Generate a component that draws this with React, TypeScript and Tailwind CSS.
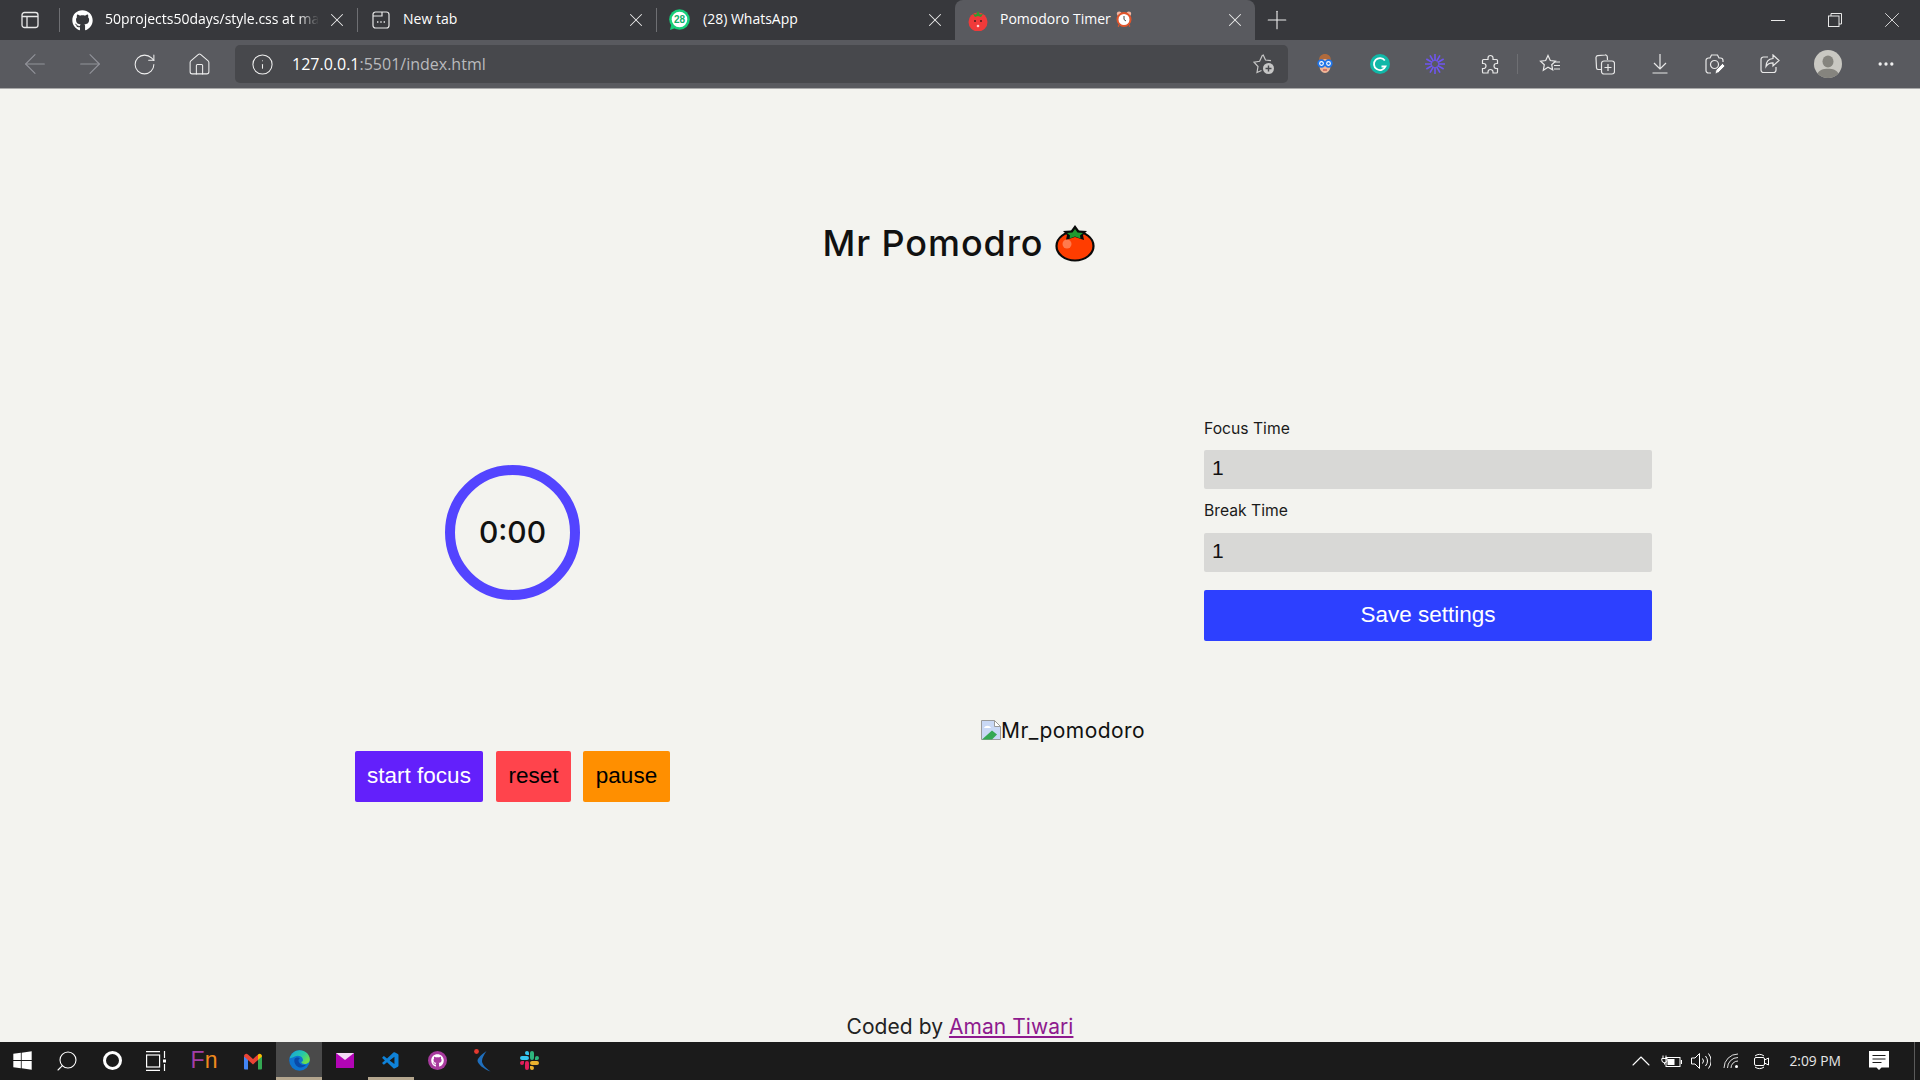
import { ArrowLeft, ArrowRight, ChevronUp, Home, Info, MoreHorizontal, Plus, RotateCw, Search, X } from 'lucide-react';
import type { ReactNode } from 'react';
import { FaGithub, FaWindows } from 'react-icons/fa';
import { VscVscode } from 'react-icons/vsc';

const uiFont = "font-['Open_Sans',sans-serif]";
const pageFont = "font-['Inter',sans-serif]";
const armFont = "font-['Liberation_Sans',Arial,sans-serif]";

const SidebarIcon = () => (
  <svg width="18" height="18" viewBox="0 0 18 18" fill="none" stroke="#e8e8e8" strokeWidth="1.3">
    <rect x="1" y="1.5" width="16" height="15" rx="2.5" />
    <path d="M1 5.5h16M6 5.5v11" />
  </svg>
);

const NewTabIcon = () => (
  <svg width="18" height="18" viewBox="0 0 18 18" fill="none" stroke="#e8e8e8" strokeWidth="1.2">
    <path d="M3.5 1h11A2.5 2.5 0 0 1 17 3.500v11a2.500 2.500 0 0 1-2.500 2.500h-11A2.500 2.500 0 0 1 1 14.500v-11A2.500 2.500 0 0 1 3.500 1zM1 5h9V1" />
    <path d="M5 11h1.400M8.300 11h1.400M11.600 11H13" strokeWidth="1.600" />
  </svg>
);

const WhatsAppIcon = () => (
  <svg width="21" height="22" viewBox="0 0 21 22">
    <circle cx="10.500" cy="10.500" r="10.300" fill="#17cf7a" />
    <path d="M1 21l1.500-6 4 4z" fill="#17cf7a" />
    <circle cx="10.500" cy="10.500" r="7.800" fill="#ffffff" />
    <text x="10.500" y="14" textAnchor="middle" fontSize="10" fontWeight="700" fill="#12b06a" fontFamily="Liberation Sans, sans-serif">28</text>
  </svg>
);

const TabTomato = () => (
  <svg width="20" height="21" viewBox="0 0 20 21">
    <circle cx="10" cy="12" r="9.500" fill="#f03a3a" />
    <path d="M5 4l3 .5L10 1l2 3.500 3-.5-2 3-3-1-3 1z" fill="#2e9b32" />
    <circle cx="7" cy="11" r="1" fill="#4b1d1d" />
    <circle cx="13" cy="11" r="1" fill="#4b1d1d" />
    <circle cx="10" cy="16" r="1.300" fill="#ffd3d3" />
  </svg>
);

const AlarmEmoji = () => (
  <svg width="16" height="16" viewBox="0 0 16 16">
    <circle cx="3.200" cy="2.800" r="2.400" fill="#f2b5a0" />
    <circle cx="12.800" cy="2.800" r="2.400" fill="#f2b5a0" />
    <circle cx="8" cy="8.500" r="6.500" fill="#fff" stroke="#e2552b" strokeWidth="2" />
    <path d="M8 5v3.500l2 1.500" fill="none" stroke="#444" strokeWidth="1" />
    <path d="M3 14.500l-1 1M13 14.500l1 1" stroke="#e2552b" strokeWidth="1.400" />
  </svg>
);

const StarPlusIcon = () => (
  <svg width="22" height="22" viewBox="0 0 22 22" fill="none" stroke="#c6c6c6" strokeWidth="1.200">
    <path d="M10 1.500l2.500 5.500 5.500.6M8.500 17.500L4 19.500l1-6L1 9.200l5.600-.9L9.500 2" />
    <circle cx="15.500" cy="15.500" r="5.500" fill="#c6c6c6" stroke="none" />
    <path d="M15.500 12.500v6M12.500 15.500h6" stroke="#47484c" strokeWidth="1.400" />
  </svg>
);

const GogglesIcon = () => (
  <svg width="16" height="22" viewBox="0 0 16 22">
    <path d="M2 8c0-5 2.500-7 6-7s6 2 6 7l1 5H1z" fill="#b06a3c" />
    <ellipse cx="8" cy="13" rx="5.500" ry="7" fill="#f0b696" />
    <circle cx="4.500" cy="10.500" r="3.300" fill="#fff" stroke="#1f74e8" strokeWidth="1.800" />
    <circle cx="11.500" cy="10.500" r="3.300" fill="#fff" stroke="#1f74e8" strokeWidth="1.800" />
    <circle cx="4.500" cy="10.500" r="1.200" fill="#1f74e8" />
    <circle cx="11.500" cy="10.500" r="1.200" fill="#1f74e8" />
    <path d="M6 17h4" stroke="#c14a4a" strokeWidth="1.200" />
  </svg>
);

const GrammarlyIcon = () => (
  <svg width="20" height="20" viewBox="0 0 20 20">
    <circle cx="10" cy="10" r="10" fill="#11b8a8" />
    <path d="M14.800 6.500A6 6 0 1 0 15.500 12.500H11.500" fill="none" stroke="#fff" strokeWidth="1.800" />
  </svg>
);

const BurstIcon = () => (
  <svg width="20" height="20" viewBox="0 0 20 20" stroke="#6f55f2" strokeWidth="1.600">
    <path d="M10 0v7M10 13v7M0 10h7M13 10h7M15 1.340l-3.500 6.060M8.500 12.600 5 18.660M18.660 5l-6.060 3.500M7.400 11.500 1.340 15M5 1.340l3.500 6.060M11.500 12.600l3.500 6.060M1.340 5l6.060 3.500M12.600 11.500l6.060 3.500" />
  </svg>
);

const PuzzleIcon = () => (
  <svg width="20" height="20" viewBox="0 0 20 20" fill="none" stroke="#e8e8e8" strokeWidth="1.200">
    <path d="M8 4a2.500 2.500 0 0 1 5 0V5.500h3.500a1 1 0 0 1 1 1V9.500h-1a2.500 2.500 0 0 0 0 5h1V18a1 1 0 0 1-1 1H13v-1a2.500 2.500 0 0 0-5 0v1H3.500a1 1 0 0 1-1-1v-3.500h1a2.500 2.500 0 0 0 0-5h-1V6.500a1 1 0 0 1 1-1H8z" />
  </svg>
);

const FavoritesIcon = () => (
  <svg width="22" height="20" viewBox="0 0 22 20" fill="none" stroke="#e8e8e8" strokeWidth="1.200">
    <path d="M9 1.500l2.300 5 5.200.6-3.800 3.600 1 5.200L9 13.300l-4.700 2.900 1-5.500L1.500 7.100l5.200-.6z" />
    <path d="M15 8h6M15 11.500h6M15 15h6" />
  </svg>
);

const CollectionsIcon = () => (
  <svg width="20" height="21" viewBox="0 0 20 21" fill="none" stroke="#e8e8e8" strokeWidth="1.200">
    <path d="M6 15.500H3.500a2 2 0 0 1-2-1.700L1 4a2 2 0 0 1 1.700-2.300L10 1a2 2 0 0 1 2.300 1.800L12.500 6" />
    <rect x="6.500" y="7" width="13" height="13" rx="2.500" />
    <path d="M13 10v7M9.500 13.500h7" />
  </svg>
);

const DownloadIcon = () => (
  <svg width="16" height="20" viewBox="0 0 16 20" fill="none" stroke="#e8e8e8" strokeWidth="1.200">
    <path d="M8 0v15M2 9l6 6 6-6M0.500 19h15" />
  </svg>
);

const CaptureIcon = () => (
  <svg width="20" height="21" viewBox="0 0 20 21" fill="none" stroke="#e8e8e8" strokeWidth="1.200">
    <path d="M6 19H3.500A2.500 2.500 0 0 1 1 16.500v-10A2.500 2.500 0 0 1 3.500 4H5l1.500-3h6L14 4h1.500A2.500 2.500 0 0 1 18 6.500V8" />
    <circle cx="9.500" cy="10.500" r="4" />
    <path d="M10 20l1-4 6.500-6.500 2.500 2.500-6.500 6.500z" fill="#ffffff" stroke="#595a5f" strokeWidth="0.800" />
  </svg>
);

const ShareIcon = () => (
  <svg width="20" height="20" viewBox="0 0 20 20" fill="none" stroke="#e8e8e8" strokeWidth="1.200">
    <path d="M8 3H3.500A2.500 2.500 0 0 0 1 5.500v10.500A2.500 2.500 0 0 0 3.500 18.500h10a2.500 2.500 0 0 0 2.500-2.500V13" />
    <path d="M13 1l6 5.500-6 5.500V8.800c-3.500 0-5.500 1-7 3.700 0-4.500 2.500-7.500 7-8z" />
  </svg>
);

const AvatarIcon = () => (
  <svg width="28" height="28" viewBox="0 0 28 28">
    <circle cx="14" cy="14" r="14" fill="#c9c8c2" />
    <ellipse cx="14" cy="11.500" rx="5.500" ry="6" fill="#85847e" />
    <path d="M3.500 23.500C5.500 20 9 18.800 14 18.800s8.500 1.200 10.500 4.700A14 14 0 0 1 14 28 14 14 0 0 1 3.500 23.500z" fill="#85847e" />
  </svg>
);

const RestoreIcon = () => (
  <svg width="14" height="14" viewBox="0 0 14 14" fill="none" stroke="#e8e8e8" strokeWidth="1">
    <rect x="0.500" y="3" width="10.500" height="10.500" />
    <path d="M3 3V.5h10.500V11H11" />
  </svg>
);

const Tomato = () => (
  <svg width="40" height="38" viewBox="0 0 40 38">
    <ellipse cx="20" cy="22" rx="18.500" ry="14.500" fill="#ff3d00" stroke="#0a0a0a" strokeWidth="2.200" />
    <path d="M20 1l4 5.500 8 .5-4 4 1 5-9-3-9 3 1-5-4-4 8-.5z" fill="#0a0a0a" />
    <path d="M20 5l2.500 3.500 5.500.5-3 2.500.5 3-5.500-2-5.500 2 .5-3-3-2.500 5.500-.5z" fill="#1f9a2f" />
    <circle cx="12" cy="20" r="4.500" fill="#ff7a4d" />
  </svg>
);

const BrokenImage = () => (
  <svg width="20" height="20" viewBox="0 0 20 20" className="shrink-0">
    <path d="M.5.500h13l6 6v13H.5z" fill="#c9d8f5" stroke="#9a9a9a" />
    <path d="M13.500.5v6h6z" fill="#ffffff" stroke="#9a9a9a" />
    <path d="M3 8c1-3 6-3 7 0z" fill="#ffffff" />
    <path d="M1 19.500l10-9 5 4-5 5z" fill="#34a853" />
  </svg>
);

const GmailIcon = () => (
  <svg width="18" height="18" viewBox="0 0 18 18">
    <path d="M0 4.500h4v13H1a1 1 0 0 1-1-1z" fill="#4285f4" />
    <path d="M14 4.500h4v12a1 1 0 0 1-1 1h-3z" fill="#34a853" />
    <path d="M0 4.500C0 2 2.500 1 4 2.500l5 4.500 5-4.500V8l-5 4.500L0 4.500z" fill="#ea4335" />
    <path d="M14 2.500C15.500 1 18 2 18 4.500L14 8z" fill="#fbbc04" />
  </svg>
);

const EdgeIcon = () => (
  <svg width="21" height="21" viewBox="0 0 21 21">
    <defs>
      <linearGradient id="edgeTop" x1="0" y1="0" x2="1" y2="0.600">
        <stop offset="0" stopColor="#1a9fe0" />
        <stop offset="0.600" stopColor="#25c9a8" />
        <stop offset="1" stopColor="#6fe04a" />
      </linearGradient>
    </defs>
    <circle cx="10.500" cy="10.500" r="10.300" fill="#0e74d0" />
    <path d="M.6 8.500C2 3.500 6 .2 10.500.2c6 0 10.300 4.500 10.300 9.300 0 3-2.500 4.500-5 4.500-2 0-3.500-1-3.500-2 1.500-.5 2-1.500 1.500-3-1-3-5-4-8-2.500C3.500 7.500 2 8 .6 8.500z" fill="url(#edgeTop)" />
    <path d="M5.500 9c1-1.500 4-2 5.500-.5-2 .5-2 3 0 5 1.500 1.500 3.500 2 6 1.300-1.500 2-4 3-6 2.700-3.500-.5-6.500-4.500-5.500-8.500z" fill="#0a4aa8" />
  </svg>
);

const MailIcon = () => (
  <svg width="18" height="15" viewBox="0 0 18 15">
    <rect width="18" height="15" fill="#b205b5" />
    <path d="M0 0h18L9 7z" fill="#f3d9f4" />
  </svg>
);

const KiteIcon = () => (
  <svg width="18" height="24" viewBox="0 0 18 24">
    <path d="M12.500 2C7 6 4 9 3.500 11.500c0 3.500 6 8.500 13 11-5.500-4-8.500-7.500-8.500-10.500 0-3 2-6 4.500-10z" fill="#1f6fbd" />
    <circle cx="2.500" cy="2.500" r="2.400" fill="#e4392f" />
  </svg>
);

const SlackIcon = () => (
  <svg width="19" height="19" viewBox="0 0 24 24">
    <path fill="#E01E5A" d="M5.042 15.165a2.528 2.528 0 0 1-2.520 2.523A2.528 2.528 0 0 1 0 15.165a2.527 2.527 0 0 1 2.522-2.520h2.520v2.520zM6.313 15.165a2.527 2.527 0 0 1 2.521-2.520 2.527 2.527 0 0 1 2.521 2.520v6.313A2.528 2.528 0 0 1 8.834 24a2.528 2.528 0 0 1-2.521-2.522v-6.313z" />
    <path fill="#36C5F0" d="M8.834 5.042a2.528 2.528 0 0 1-2.521-2.520A2.528 2.528 0 0 1 8.834 0a2.528 2.528 0 0 1 2.521 2.522v2.520H8.834zM8.834 6.313a2.528 2.528 0 0 1 2.521 2.521 2.528 2.528 0 0 1-2.521 2.521H2.522A2.528 2.528 0 0 1 0 8.834a2.528 2.528 0 0 1 2.522-2.521h6.312z" />
    <path fill="#2EB67D" d="M18.956 8.834a2.528 2.528 0 0 1 2.522-2.521A2.528 2.528 0 0 1 24 8.834a2.528 2.528 0 0 1-2.522 2.521h-2.522V8.834zM17.688 8.834a2.528 2.528 0 0 1-2.523 2.521 2.527 2.527 0 0 1-2.520-2.521V2.522A2.527 2.527 0 0 1 15.165 0a2.528 2.528 0 0 1 2.523 2.522v6.312z" />
    <path fill="#ECB22E" d="M15.165 18.956a2.528 2.528 0 0 1 2.523 2.522A2.528 2.528 0 0 1 15.165 24a2.527 2.527 0 0 1-2.520-2.522v-2.522h2.520zM15.165 17.688a2.527 2.527 0 0 1-2.520-2.523 2.526 2.526 0 0 1 2.520-2.520h6.313A2.527 2.527 0 0 1 24 15.165a2.528 2.528 0 0 1-2.522 2.523h-6.313z" />
  </svg>
);

const TaskViewIcon = () => (
  <svg width="20" height="20" viewBox="0 0 20 20" fill="none" stroke="#fff" strokeWidth="1.200">
    <path d="M0 .6h14M0 19.400h14" />
    <rect x=".6" y="4" width="13" height="12" />
    <path d="M18.500 0v7M18.500 13v7" />
    <path d="M18.500 8.500v3" strokeWidth="3" />
  </svg>
);

const BatteryIcon = () => (
  <svg width="21" height="13" viewBox="0 0 21 13" fill="none" stroke="#fff" strokeWidth="1">
    <path d="M2 .5v3M5 .5v3M.8 3.500h5.400v1.500a2.700 2.700 0 0 1-5.400 0zM3.500 7.500v2" />
    <rect x="5" y="2.500" width="14" height="9" />
    <rect x="6.500" y="4" width="7" height="6" fill="#fff" stroke="none" />
    <path d="M20.500 5v4" strokeWidth="1.200" />
  </svg>
);

const VolumeIcon = () => (
  <svg width="20" height="18" viewBox="0 0 20 18" fill="none" stroke="#fff" strokeWidth="1">
    <path d="M.5 6H4L8.500 1.500v15L4 12H.5z" />
    <path d="M11.500 6.500a4 4 0 0 1 0 5M14.500 4a8 8 0 0 1 0 10M17.500 1.500a12 12 0 0 1 0 15" />
  </svg>
);

const WifiIcon = () => (
  <svg width="16" height="16" viewBox="0 0 16 16" fill="none" stroke="#fff" strokeWidth="1">
    <path d="M1 15A14 14 0 0 1 15 1M4.500 15A10.500 10.500 0 0 1 15 4.500M8 15A7 7 0 0 1 15 8" opacity="0.850" />
    <circle cx="13.500" cy="13.500" r="1.500" fill="#fff" stroke="none" />
  </svg>
);

const MeetIcon = () => (
  <svg width="15" height="19" viewBox="0 0 15 19" fill="none" stroke="#fff" strokeWidth="1">
    <path d="M1 4a7 7 0 0 1 9 0M1 15a7 7 0 0 0 9 0" />
    <rect x=".5" y="5.500" width="10" height="8" rx="1.500" />
    <path d="M10.500 8l4-2v7l-4-2" />
  </svg>
);

const NotificationIcon = () => (
  <svg width="20" height="20" viewBox="0 0 20 20">
    <path d="M0 0h20v16.500h-7.500L10 19l-2.500-2.500H0z" fill="#fff" />
    <path d="M3.500 4.500h13M3.500 8h13M3.500 11.500h9" stroke="#1b1b1b" strokeWidth="1.100" />
  </svg>
);

const TabClose = () => <X size={22} strokeWidth={1.1} color="#ececec" className="shrink-0" />;

type TabProps = {
  icon: ReactNode;
  width: string;
  active?: boolean;
  children: ReactNode;
};

const Tab = ({ icon, width, active, children }: TabProps) => (
  <div className={`${width} ${active ? 'h-full bg-[#595a5f] rounded-t-[8px]' : 'h-[24px] my-[8px] border-r border-[#6e6f73]'} flex items-center shrink-0 pl-[12px] pr-[9px]`}>
    <span className="w-[21px] h-[21px] flex items-center justify-center shrink-0">{icon}</span>
    <span className="ml-[12px] flex-1 min-w-0 flex items-center whitespace-nowrap overflow-hidden text-[14px] leading-[20px] pb-[2px] text-white">{children}</span>
    <TabClose />
  </div>
);

const Slot = ({ children }: { children: ReactNode }) => (
  <div className="w-[55px] h-full flex items-center justify-center shrink-0">{children}</div>
);

type TileProps = {
  children: ReactNode;
  active?: boolean;
  running?: boolean;
  width?: string;
};

const Tile = ({ children, active, running, width = 'w-[46px]' }: TileProps) => (
  <div className={`${width} h-full flex items-center justify-center shrink-0 pt-[2px] border-b-[3px] ${active ? 'bg-[#4a4a4a] border-[#b4a68e]' : running ? 'border-[#b4a68e]' : 'border-transparent'}`}>
    {children}
  </div>
);

const BrowserChrome = () => (
  <header className={`${uiFont} shrink-0`}>
    <div className="h-[40px] bg-[#37383c] flex items-start">
      <div className="w-[60px] h-[24px] mt-[8px] flex items-center justify-center border-r border-[#6e6f73] shrink-0">
        <SidebarIcon />
      </div>
      <Tab width="w-[298px]" icon={<FaGithub size={21} color="#fff" />}>
        <span className="[mask-image:linear-gradient(to_right,black_90%,transparent)]">50projects50days/style.css at ma</span>
      </Tab>
      <Tab width="w-[299px]" icon={<NewTabIcon />}>New tab</Tab>
      <div className="w-[298px] h-[24px] my-[8px] flex items-center pl-[12px] pr-[9px] shrink-0">
        <WhatsAppIcon />
        <span className="ml-[13px] flex-1 text-[14px] leading-[20px] pb-[2px] text-white">(28) WhatsApp</span>
        <TabClose />
      </div>
      <Tab width="w-[300px]" active icon={<TabTomato />}>
        Pomodoro Timer <span className="ml-[5px]"><AlarmEmoji /></span>
      </Tab>
      <div className="w-[44px] h-full flex items-center justify-center shrink-0">
        <Plus size={30} strokeWidth={0.9} color="#ececec" />
      </div>
      <div className="ml-auto h-full flex items-center">
        <div className="w-[57px] flex justify-center"><div className="w-[14px] h-px bg-[#e8e8e8]" /></div>
        <div className="w-[57px] flex justify-center"><RestoreIcon /></div>
        <div className="w-[57px] flex justify-center"><X size={26} strokeWidth={0.8} color="#ececec" /></div>
      </div>
    </div>
    <div className="h-[49px] bg-[#595a5f] border-b border-[#a9a9a9] flex items-center pl-[7px]">
      <Slot><ArrowLeft size={32} strokeWidth={0.8} color="#92939a" /></Slot>
      <Slot><ArrowRight size={32} strokeWidth={0.8} color="#92939a" /></Slot>
      <Slot><RotateCw size={25} strokeWidth={1} color="#efefef" /></Slot>
      <Slot><Home size={25} strokeWidth={1} color="#efefef" /></Slot>
      <div className="ml-[8px] w-[1053px] h-[38px] bg-[#47484c] rounded-[5px] flex items-center pl-[16px] pr-[13px] shrink-0">
        <Info size={23} strokeWidth={1.1} color="#efefef" />
        <span className="ml-[18px] text-[16px] text-[#b9babd]">
          <span className="text-white">127.0.0.1</span>:5501/index.html
        </span>
        <span className="ml-auto"><StarPlusIcon /></span>
      </div>
      <div className="ml-[9px] h-full flex items-center">
        <Slot><GogglesIcon /></Slot>
        <Slot><GrammarlyIcon /></Slot>
        <Slot><BurstIcon /></Slot>
        <Slot><PuzzleIcon /></Slot>
        <div className="w-[5px] flex justify-start"><div className="w-px h-[20px] bg-[#6e6f73]" /></div>
        <Slot><FavoritesIcon /></Slot>
        <Slot><CollectionsIcon /></Slot>
        <Slot><DownloadIcon /></Slot>
        <Slot><CaptureIcon /></Slot>
        <Slot><ShareIcon /></Slot>
        <div className="w-[61px] h-full flex items-center justify-center shrink-0"><AvatarIcon /></div>
        <Slot><MoreHorizontal size={20} strokeWidth={2} color="#efefef" /></Slot>
      </div>
    </div>
  </header>
);

const Taskbar = () => (
  <footer className="h-[38px] shrink-0 bg-[#1b1b1b] flex items-stretch relative">
    <Tile width="w-[44px]"><FaWindows size={21} color="#fff" /></Tile>
    <Tile><Search size={24} strokeWidth={1.1} color="#fff" className="-scale-x-100" /></Tile>
    <Tile width="w-[44px]"><div className="w-[19px] h-[19px] rounded-full border-[3px] border-white" /></Tile>
    <Tile width="w-[44px]"><TaskViewIcon /></Tile>
    <Tile width="w-[52px]">
      <span className={`${armFont} text-[23px] leading-none`}>
        <span className="text-[#a23ea8]">F</span><span className="text-[#f08a1d]">n</span>
      </span>
    </Tile>
    <Tile><GmailIcon /></Tile>
    <Tile active><EdgeIcon /></Tile>
    <Tile><MailIcon /></Tile>
    <Tile running><VscVscode size={20} color="#0f82d8" /></Tile>
    <Tile>
      <div className="w-[19px] h-[19px] rounded-full bg-[#a83a9e] flex items-center justify-center"><FaGithub size={13} color="#fff" /></div>
    </Tile>
    <Tile><KiteIcon /></Tile>
    <Tile><SlackIcon /></Tile>
    <div className="ml-auto flex items-center text-white pr-[31px]">
      <ChevronUp size={32} strokeWidth={0.8} color="#fff" />
      <span className="ml-[4px]"><BatteryIcon /></span>
      <span className="ml-[9px]"><VolumeIcon /></span>
      <span className="ml-[12px]"><WifiIcon /></span>
      <span className="ml-[15px]"><MeetIcon /></span>
      <span className={`${uiFont} ml-[20px] text-[13.8px] text-[#e6e6e6]`}>2:09 PM</span>
      <span className="ml-[28px]"><NotificationIcon /></span>
    </div>
    <div className="absolute right-[5px] top-0 bottom-0 w-px bg-[#5a5a5a]" />
  </footer>
);

type FieldProps = {
  label: string;
  inputGap: string;
};

const Field = ({ label, inputGap }: FieldProps) => (
  <div>
    <label className="block h-[18px] text-[15.7px] leading-[18px] text-[#1a1a1a]">{label}</label>
    <input
      type="number"
      defaultValue="1"
      className={`${armFont} ${inputGap} block w-full h-[39px] bg-[#d8d8d6] rounded-[2px] px-[8px] pb-[3px] text-[21px] text-[#111] outline-none`}
    />
  </div>
);

export default function App() {
  return (
    <div className="w-[1920px] h-[1080px] flex flex-col overflow-hidden bg-[#f3f3ef]">
      <BrowserChrome />
      <main className={`${pageFont} flex-1 min-h-0 flex flex-col`}>
        <div className="mt-[132px] flex items-center justify-center">
          <h1 className="text-[36px] leading-[44px] font-[550] tracking-[0.9px] text-[#111]">Mr Pomodro</h1>
          <span className="ml-[12px] mr-[2px]"><Tomato /></span>
        </div>
        <div className="mt-[155px] flex pl-[355px]">
          <div className="w-[315px] flex flex-col items-center pt-[45px] shrink-0">
            <div className="w-[135px] h-[135px] rounded-full border-[10px] border-[#5344ff] flex items-center justify-center">
              <span className="text-[30px] font-[550] text-[#111]">0:00</span>
            </div>
            <div className={`${armFont} self-stretch mt-[151px] flex text-[22.5px]`}>
              <button className="w-[128px] h-[51px] pb-[2px] bg-[#6320fb] rounded-[2px] text-white">start focus</button>
              <button className="ml-[13px] w-[75px] h-[51px] pb-[2px] bg-[#ff444c] rounded-[2px] text-black">reset</button>
              <button className="ml-[12px] w-[87px] h-[51px] pb-[2px] bg-[#ff8f00] rounded-[2px] text-black">pause</button>
            </div>
          </div>
          <div className="w-[534px] shrink-0 pl-[311px] pt-[298px]">
            <div className="flex items-center text-[21px] leading-[22px] tracking-[0.45px] text-[#111] whitespace-nowrap">
              <BrokenImage /><span className="pt-[2px]">Mr_pomodoro</span>
            </div>
          </div>
          <form className="w-[448px] shrink-0 flex flex-col">
            <Field label="Focus Time" inputGap="mt-[12px]" />
            <div className="mt-[13px]"><Field label="Break Time" inputGap="mt-[13px]" /></div>
            <button type="button" className={`${armFont} mt-[18px] h-[51px] pb-[2px] bg-[#2d40ff] rounded-[2px] text-white text-[22.5px]`}>Save settings</button>
          </form>
        </div>
        <p className="mt-auto mb-[1px] text-center text-[21px] leading-[28px] tracking-[0.05px] text-[#222]">
          Coded by <a href="#" className="text-[#8e1a8e] underline">Aman Tiwari</a>
        </p>
      </main>
      <Taskbar />
    </div>
  );
}
